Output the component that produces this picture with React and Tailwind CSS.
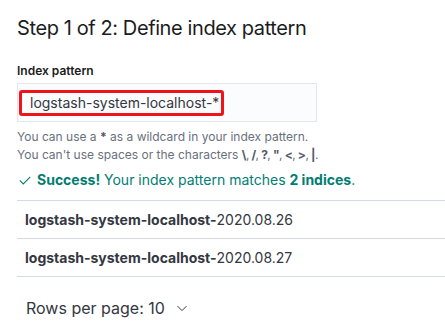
import React from 'react';

const rows = ['2020.08.26', '2020.08.27'];

const App = () => {
  return (
    <div className="w-[445px] h-[323px] overflow-hidden bg-white pl-[17px] pt-[14px] text-[#343741]" style={{ fontFamily: 'Inter, "Noto Sans", sans-serif' }}>
      {/* Title */}
      <h2 className="text-[20px] leading-[28px] tracking-[-0.02em] text-[#1a1c21]">Step 1 of 2: Define index pattern</h2>

      {/* Field */}
      <div className="mt-[21px]">
        <label className="block text-[12px] leading-[16px] font-semibold text-[#1a1c21]">Index pattern</label>
        <div className="mt-[4px] w-[300px] h-[39px] border border-[#e3e6ec] bg-[#fbfcfd] flex items-center pl-[1px]">
          <div className="h-[26px] w-[205px] border-[3px] border-[#f0141a] rounded-[3px] flex items-center pl-[8px] text-[14px] whitespace-nowrap text-[#343741]">
            logstash-system-localhost-*
          </div>
        </div>
        <div className="mt-[6px] text-[12px] leading-[18px] text-[#69707d]">
          <div>You can use a <b className="font-bold text-[#535966]">*</b> as a wildcard in your index pattern.</div>
          <div>
            You can't use spaces or the characters{' '}
            <span className="tracking-[-0.05em]">
              <b className="font-bold text-[#535966]">\</b>, <b className="font-bold text-[#535966]">/</b>, <b className="font-bold text-[#535966]">?</b>, <b className="font-bold text-[#535966]">"</b>, <b className="font-bold text-[#535966]">&lt;</b>, <b className="font-bold text-[#535966]">&gt;</b>, <b className="font-bold text-[#535966]">|</b>.
            </span>
          </div>
        </div>
      </div>

      {/* Success */}
      <div className="mt-[6px] flex items-center text-[14px] leading-[20px] text-[#017d73]">
        <svg width="14" height="14" viewBox="0 0 16 16" className="ml-[1px] mr-[5px]" fill="none" stroke="#017d73" strokeWidth="1.2">
          <path d="M2 8.5l4 4 8-8" />
        </svg>
        <span><b className="font-bold">Success!</b> Your index pattern matches <b className="font-bold">2 indices</b>.</span>
      </div>

      {/* Table */}
      <div className="mt-[10px] border-t border-[#d3dae6]">
        {rows.map((r) => (
          <div key={r} className="h-[38px] border-b border-[#d3dae6] flex items-center pl-[8px] text-[14px]">
            <span className="font-bold">logstash-system-localhost-</span>
            <span>{r}</span>
          </div>
        ))}
      </div>

      {/* Pagination */}
      <div className="mt-[19px] ml-[9px] flex items-center text-[16px] text-[#343741]">
        <span>Rows per page: 10</span>
        <svg width="12" height="12" viewBox="0 0 16 16" className="ml-[11px]" fill="none" stroke="#343741" strokeWidth="1.3">
          <path d="M2 5.5l6 6 6-6" />
        </svg>
      </div>
    </div>
  );
};

export default App;
